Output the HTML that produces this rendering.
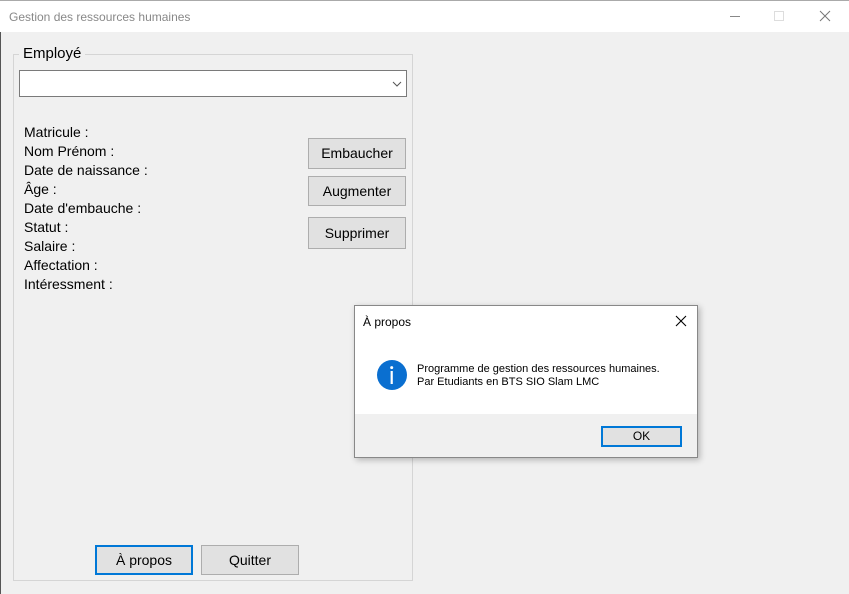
<!DOCTYPE html>
<html><head><meta charset="utf-8"><style>
*{margin:0;padding:0;box-sizing:border-box}
body{width:849px;height:594px;overflow:hidden;background:#f0f0f0;font-family:"Liberation Sans",sans-serif;position:relative;color:#000}
.a{position:absolute}
.title{left:0;top:0;width:849px;height:32px;background:#fff;border-top:1px solid #aaa}
.lbl{font-size:14px;left:24px;line-height:19px}
.btn{position:absolute;background:#e1e1e1;border:1px solid #adadad;font-size:14px;text-align:center}
</style></head><body>
<div class="a" style="left:0;top:0;width:1px;height:594px;background:#555"></div>
<div class="a title"></div>
<div class="a" style="left:9px;top:10px;font-size:12px;color:#888">Gestion des ressources humaines</div>
<div class="a" style="left:730px;top:16px;width:10px;height:1px;background:#888"></div>
<div class="a" style="left:774px;top:11px;width:10px;height:10px;border:1px solid #ddd"></div>
<svg class="a" style="left:819px;top:10px" width="12" height="12"><path d="M1 1L11 11M11 1L1 11" stroke="#777" stroke-width="1"/></svg>

<div class="a" style="left:13px;top:54px;width:400px;height:527px;border:1px solid #d5d5d5"></div>
<div class="a" style="left:19px;top:44px;padding:0 4px;background:#f0f0f0;font-size:15px;line-height:20px">Employé</div>
<div class="a" style="left:19px;top:70px;width:388px;height:27px;background:#fff;border:1px solid #7a7a7a"></div>
<svg class="a" style="left:392px;top:81px" width="10" height="6"><path d="M1 1L5 5L9 1" stroke="#555" fill="none"/></svg>

<div class="a lbl" style="top:123px">Matricule :<br>Nom Prénom :<br>Date de naissance :<br>Âge :<br>Date d'embauche :<br>Statut :<br>Salaire :<br>Affectation :<br>Intéressment :</div>

<div class="btn" style="left:308px;top:138px;width:98px;height:31px;line-height:29px">Embaucher</div>
<div class="btn" style="left:308px;top:176px;width:98px;height:30px;line-height:28px">Augmenter</div>
<div class="btn" style="left:308px;top:217px;width:98px;height:32px;line-height:30px">Supprimer</div>
<div class="btn" style="left:95px;top:545px;width:98px;height:30px;line-height:26px;border:2px solid #0078d7">À propos</div>
<div class="btn" style="left:201px;top:545px;width:98px;height:30px;line-height:28px">Quitter</div>

<div class="a" style="left:354px;top:305px;width:344px;height:153px;border:1px solid #888;background:#fff;box-shadow:2px 2px 6px rgba(0,0,0,.25)">
 <div class="a" style="left:8px;top:9px;font-size:12px">À propos</div>
 <svg class="a" style="left:320px;top:9px" width="12" height="12"><path d="M1 1L11 11M11 1L1 11" stroke="#000" stroke-width="1.1"/></svg>
 <svg class="a" style="left:21px;top:53px" width="32" height="32"><circle cx="16" cy="16" r="15" fill="#0a6fd0"/><rect x="14.6" y="12" width="2.2" height="13" fill="#fff"/><circle cx="15.7" cy="8.6" r="1.5" fill="#fff"/></svg>
 <div class="a" style="left:62px;top:57px;font-size:11px;line-height:13px">Programme de gestion des ressources humaines.<br>Par Etudiants en BTS SIO Slam LMC</div>
 <div class="a" style="left:0;top:108px;width:342px;height:43px;background:#f0f0f0"></div>
 <div class="btn" style="left:246px;top:120px;width:81px;height:21px;line-height:17px;border:2px solid #0078d7;font-size:12px">OK</div>
</div>
</body></html>
